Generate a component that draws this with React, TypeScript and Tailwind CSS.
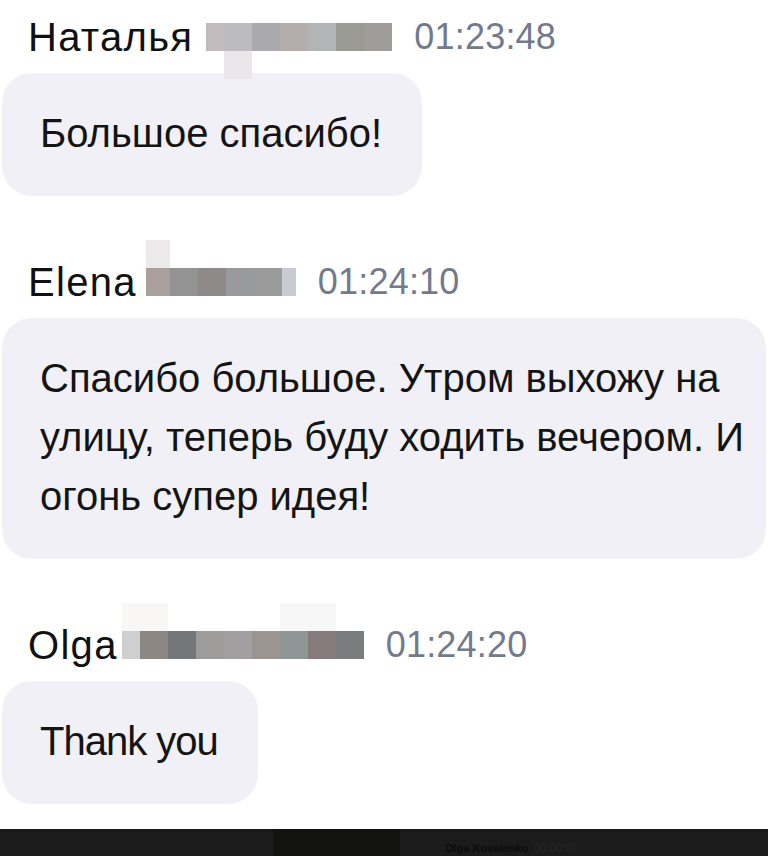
import React from "react";

type Msg = {
  name: string;
  time: string;
  lines: string[];
  blurGap: number;
  firstW: number;
  lastW: number;
  blocks: string[];
  topBlocks: { from: number; to: number; color: string }[];
  above: boolean;
  wide?: boolean;
  latin?: boolean;
};

const messages: Msg[] = [
  {
    name: "Наталья",
    time: "01:23:48",
    lines: ["Большое спасибо!"],
    blurGap: 13,
    firstW: 18,
    lastW: 28,
    blocks: ["#c2babd", "#bcbbbf", "#aaa9ad", "#b3aeac", "#b1b5b6", "#9a9a94", "#9f9c99"],
    topBlocks: [{ from: 18, to: 46, color: "#e9e7e9" }],
    above: false,
  },
  {
    name: "Elena",
    time: "01:24:10",
    lines: ["Спасибо большое. Утром выхожу на", "улицу, теперь буду ходить вечером. И", "огонь супер идея!"],
    blurGap: 9,
    firstW: 24,
    lastW: 14,
    blocks: ["#a9a09e", "#939393", "#8e8a89", "#999a9c", "#9b9b9b", "#c9cbd4"],
    topBlocks: [{ from: 0, to: 24, color: "#ebe9e9" }],
    above: true,
    wide: true,
  },
  {
    name: "Olga",
    time: "01:24:20",
    lines: ["Thank you"],
    blurGap: 4,
    firstW: 18,
    lastW: 28,
    blocks: ["#cfcfcf", "#8c8783", "#74777a", "#9d9c9a", "#a19fa0", "#9a9591", "#8f9696", "#857b7d", "#7a7c7e"],
    topBlocks: [
      { from: 0, to: 46, color: "#f8f7f5" },
      { from: 158, to: 214, color: "#f7f7f7" },
    ],
    above: true,
    latin: true,
  },
];

function Blur({ m }: { m: Msg }) {
  // mosaic placeholder for the hidden surname
  return (
    <div className="relative flex h-[28px] self-center" style={{ marginLeft: m.blurGap }}>
      {m.blocks.map((c, i) => (
        <div
          key={i}
          className="h-full"
          style={{ background: c, width: i === 0 ? m.firstW : i === m.blocks.length - 1 ? m.lastW : 28 }}
        />
      ))}
      {m.topBlocks.map((t, i) => (
        <div
          key={"t" + i}
          className={m.above ? "absolute top-[-28px] h-[28px]" : "absolute top-[28px] h-[28px]"}
          style={{ left: t.from, width: t.to - t.from, background: t.color }}
        />
      ))}
    </div>
  );
}

function Message({ m }: { m: Msg }) {
  return (
    <div className="flex flex-col">
      <div className="flex items-center pl-[26px] h-[40px] leading-[40px]">
        <span className="text-[40px] text-[#111] tracking-[1.3px]">{m.name}</span>
        <Blur m={m} />
        <span className="ml-[22px] text-[36px] text-[#737a8b] tracking-[0.2px]">{m.time}</span>
      </div>
      <div
        className={
          m.wide
            ? "mt-[16px] w-[764px] rounded-[30px] bg-[#f0f0f6] pl-[38px] pr-[20px] pt-[31px] pb-[33px]"
            : "mt-[16px] w-fit rounded-[30px] bg-[#f0f0f6] pl-[38px] pr-[40px] pt-[31px] pb-[33px]"
        }
      >
        {m.lines.map((l, i) => (
          <div
            key={i}
            className={
              m.latin
                ? "text-[40px] leading-[59px] text-[#141414] tracking-[-1px] whitespace-nowrap"
                : "text-[40px] leading-[59px] text-[#141414] tracking-[0px] whitespace-nowrap"
            }
          >
            {l}
          </div>
        ))}
      </div>
    </div>
  );
}

export default function App() {
  return (
    <div className="h-[856px] w-[768px] overflow-hidden bg-white flex flex-col" style={{ fontFamily: '"Liberation Sans", Arial, sans-serif' }}>
      <div className="pl-[2px] pt-[17px] flex flex-col gap-[66px]">
        {messages.map((m) => (
          <Message key={m.name} m={m} />
        ))}
      </div>
      <div className="mt-[25px] flex-1 bg-[#1b1b1b] flex">
        <div className="ml-[273px] w-[127px] bg-[#131410]" />
        <div className="ml-[45px] mt-[14px] flex gap-[6px] text-[11px] leading-[11px] text-[#0d0d0d] font-bold">
          <span>Olga Kovalenko</span>
          <span className="text-[#262626] font-normal">00:00:00</span>
        </div>
      </div>
    </div>
  );
}
